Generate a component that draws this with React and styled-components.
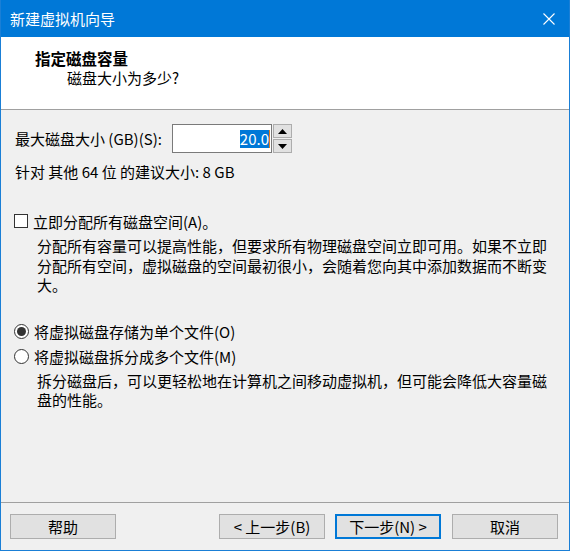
import React from "react";
import styled, { createGlobalStyle } from "styled-components";

const GlobalStyle = createGlobalStyle`
    html, body {
        margin: 0;
        padding: 0;
        background: #ffffff;
    }
    body {
        font-family: "Noto Sans CJK SC", "Noto Sans", "Liberation Sans", sans-serif;
        font-size: 15px;
        color: #000;
    }
`

const Window = styled.div`
    width: 570px;
    height: 551px;
    box-sizing: border-box;
    border: 1px solid #1a7fd6;
    border-top: none;
    display: flex;
    flex-direction: column;
    background: #f0f0f0;
    overflow: hidden;
`

const TitleBar = styled.div`
    height: 37px;
    margin: 0 -1px;
    background: #0078d7;
    color: #fff;
    display: flex;
    align-items: center;
    justify-content: space-between;
    padding: 0 15px 0 10px;
    font-size: 15px;
    flex-shrink: 0;
`

const CloseIcon = () => (
    <svg width="12" height="12" viewBox="0 0 12 12">
        <path d="M0.5 0.5 L11.5 11.5 M11.5 0.5 L0.5 11.5" stroke="#fff" strokeWidth="1.1" fill="none" />
    </svg>
)

const Header = styled.div`
    height: 73px;
    background: #fff;
    border-bottom: 1px solid #a0a0a0;
    padding: 11px 0 0 34px;
    box-sizing: border-box;
    flex-shrink: 0;
`

const HeaderTitle = styled.div`
    font-weight: bold;
    font-size: 15.5px;
    line-height: 20px;
`

const HeaderSub = styled.div`
    line-height: 20px;
    padding-left: 32px;
`

const Body = styled.div`
    flex: 1;
    padding: 14px 0 0 13px;
`

const SizeRow = styled.div`
    display: flex;
    align-items: center;
    height: 29px;
`

const SizeLabel = styled.label`
    width: 157px;
    padding-left: 1px;
`

const NumberBox = styled.div`
    width: 100px;
    height: 29px;
    box-sizing: border-box;
    border: 1px solid #7a7a7a;
    background: #fff;
    display: flex;
    align-items: center;
    justify-content: flex-end;
    padding-right: 1px;
`

const Selected = styled.span`
    background: #0078d7;
    color: #fff;
    font-size: 15px;
    line-height: 18px;
`

const Caret = styled.span`
    width: 1px;
    height: 18px;
    background: #e07a1f;
`

const Spinner = styled.div`
    display: flex;
    flex-direction: column;
    margin-left: 1px;
    height: 29px;
    gap: 1px;
`

const SpinButton = styled.div`
    width: 19px;
    flex: 1;
    box-sizing: border-box;
    border: 1px solid #adadad;
    background: #e1e1e1;
    display: flex;
    align-items: center;
    justify-content: center;
`

const Arrow = ({ up }) => (
    <svg width="9" height="5" viewBox="0 0 9 5">
        <path d={up ? "M0 5 L4.5 0 L9 5 Z" : "M0 0 L4.5 5 L9 0 Z"} fill="#000" />
    </svg>
)

const Hint = styled.div`
    line-height: 20px;
    margin-top: 9px;
    padding-left: 1px;
`

const OptionRow = styled.div`
    display: flex;
    align-items: center;
    height: 20px;
    margin-top: ${(p) => p.$top}px;
    gap: 5px;
`

const CheckBox = styled.span`
    width: 14px;
    height: 14px;
    box-sizing: border-box;
    border: 1px solid #333;
    background: #fff;
`

const Radio = styled.span`
    width: 15px;
    height: 15px;
    box-sizing: border-box;
    border: 1px solid #333;
    border-radius: 50%;
    background: #fff;
    display: flex;
    align-items: center;
    justify-content: center;
    &::after {
        content: "";
        width: 9px;
        height: 9px;
        border-radius: 50%;
        background: ${(p) => (p.$checked ? "#333" : "transparent")};
    }
`

const Description = styled.p`
    margin: ${(p) => p.$top}px 0 0;
    padding-left: 23px;
    width: 516px;
    line-height: 19.5px;
`

const Footer = styled.div`
    height: 48px;
    border-top: 1px solid #a0a0a0;
    box-sizing: border-box;
    display: flex;
    align-items: flex-start;
    padding: 11px 11px 0 9px;
    flex-shrink: 0;
`

const Spacer = styled.div`
    flex: 1;
`

const Button = styled.button`
    width: 106px;
    height: 25px;
    box-sizing: border-box;
    border: ${(p) => (p.$primary ? "2px solid #0078d7" : "1px solid #adadad")};
    background: #e1e1e1;
    font-family: inherit;
    font-size: 15px;
    color: #000;
    padding: 0;
    margin-left: ${(p) => p.$gap || 0}px;
    line-height: 1;
`

export default function App() {
    return (
        <>
            <GlobalStyle />
            <Window>
                <TitleBar>
                    <span>新建虚拟机向导</span>
                    <CloseIcon />
                </TitleBar>
                <Header>
                    <HeaderTitle>指定磁盘容量</HeaderTitle>
                    <HeaderSub>磁盘大小为多少?</HeaderSub>
                </Header>
                <Body>
                    <SizeRow>
                        <SizeLabel>最大磁盘大小 (GB)(S):</SizeLabel>
                        <NumberBox>
                            <Selected>20.0</Selected>
                            <Caret />
                        </NumberBox>
                        <Spinner>
                            <SpinButton><Arrow up /></SpinButton>
                            <SpinButton><Arrow /></SpinButton>
                        </Spinner>
                    </SizeRow>
                    <Hint>针对 其他 64 位 的建议大小: 8 GB</Hint>
                    <OptionRow $top={29}>
                        <CheckBox />
                        <span>立即分配所有磁盘空间(A)。</span>
                    </OptionRow>
                    <Description $top={5}>
                        分配所有容量可以提高性能，但要求所有物理磁盘空间立即可用。如果不立即分配所有空间，虚拟磁盘的空间最初很小，会随着您向其中添加数据而不断变大。
                    </Description>
                    <OptionRow $top={27}>
                        <Radio $checked />
                        <span>将虚拟磁盘存储为单个文件(O)</span>
                    </OptionRow>
                    <OptionRow $top={5}>
                        <Radio />
                        <span>将虚拟磁盘拆分成多个文件(M)</span>
                    </OptionRow>
                    <Description $top={4}>
                        拆分磁盘后，可以更轻松地在计算机之间移动虚拟机，但可能会降低大容量磁盘的性能。
                    </Description>
                </Body>
                <Footer>
                    <Button>帮助</Button>
                    <Spacer />
                    <Button>&lt; 上一步(B)</Button>
                    <Button $primary $gap={10}>下一步(N) &gt;</Button>
                    <Button $gap={11}>取消</Button>
                </Footer>
            </Window>
        </>
    );
}
